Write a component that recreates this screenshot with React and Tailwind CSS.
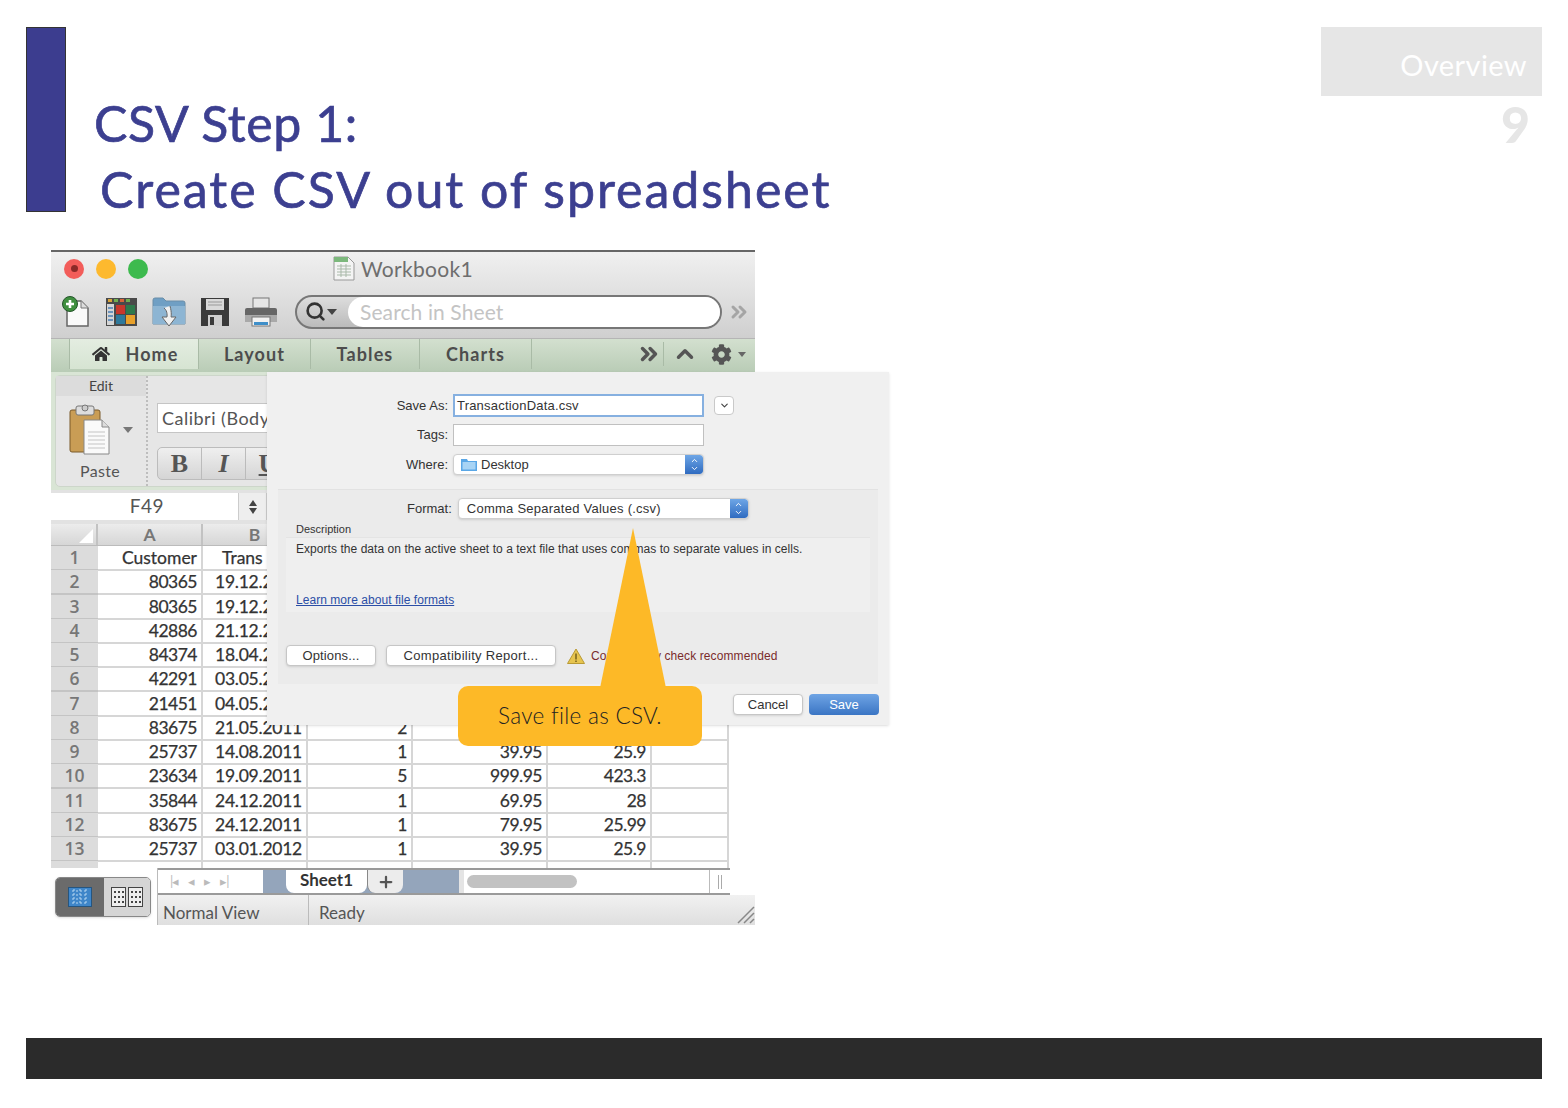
import React from 'react';
import { ChevronUp, ChevronDown, ChevronsRight, Search, Plus } from 'lucide-react';
import { FaHome, FaCog } from 'react-icons/fa';

const COLS = 'grid grid-cols-[47px_105px_105px_105px_135px_104px_77px]';

const ROWS = [
  ['Customer', 'Trans', '', '', '', ''],
  ['80365', '19.12.2010', '', '', '', ''],
  ['80365', '19.12.2010', '', '', '', ''],
  ['42886', '21.12.2010', '', '', '', ''],
  ['84374', '18.04.2011', '', '', '', ''],
  ['42291', '03.05.2011', '', '', '', ''],
  ['21451', '04.05.2011', '', '', '', ''],
  ['83675', '21.05.2011', '2', '', '', ''],
  ['25737', '14.08.2011', '1', '39.95', '25.9', ''],
  ['23634', '19.09.2011', '5', '999.95', '423.3', ''],
  ['35844', '24.12.2011', '1', '69.95', '28', ''],
  ['83675', '24.12.2011', '1', '79.95', '25.99', ''],
  ['25737', '03.01.2012', '1', '39.95', '25.9', ''],
];

/* toolbar icons */
const NewIcon = () => (
  <svg width="30" height="34" viewBox="0 0 30 34">
    <path d="M6 6h14l7 7v18H6z" fill="#fafafa" stroke="#666" strokeWidth="1.5" />
    <path d="M20 6v7h7" fill="#ddd" stroke="#777" />
    <circle cx="9" cy="9" r="7.5" fill="#3f8f3f" stroke="#24552a" />
    <path d="M9 5v8M5 9h8" stroke="#fff" strokeWidth="2.6" />
  </svg>
);

const GalleryIcon = () => (
  <svg width="33" height="30" viewBox="0 0 33 30">
    <rect x="1" y="1" width="31" height="28" fill="#4a4a4a" />
    <rect x="3" y="2" width="4" height="3" fill="#d8a33a" />
    <rect x="9" y="2" width="4" height="3" fill="#6fae4f" />
    <rect x="15" y="2" width="4" height="3" fill="#d8633a" />
    <rect x="21" y="2" width="4" height="3" fill="#6fae4f" />
    <rect x="2" y="7" width="7" height="21" fill="#d5d5d5" />
    <path d="M3 11h5M3 15h5M3 19h5M3 23h5" stroke="#4a7fb5" strokeWidth="1.6" />
    <rect x="11" y="8" width="9" height="9" fill="#c9372c" />
    <rect x="21" y="8" width="9" height="9" fill="#2f7a4c" />
    <rect x="11" y="18" width="9" height="9" fill="#2f7a9c" />
    <rect x="21" y="18" width="9" height="9" fill="#e8a12b" />
  </svg>
);

const OpenIcon = () => (
  <svg width="34" height="32" viewBox="0 0 34 32">
    <path d="M1 4q0-2 2-2h8l3 3h17q2 0 2 2v21H1z" fill="#6f9fc4" stroke="#6a8ea8" />
    <path d="M1 10h32v18H1z" fill="#8db5d3" />
    <path d="M18 10c2 7 1 11 1 11h5l-7 9-7-9h5s1-6-3-9" fill="#f0f0f0" stroke="#666" />
  </svg>
);

const SaveIcon = () => (
  <svg width="30" height="30" viewBox="0 0 30 30">
    <path d="M1 1h28v28H1z" fill="#3a3a3a" />
    <rect x="6" y="2" width="18" height="11" fill="#d9d9d9" />
    <path d="M8 5h14M8 8h14" stroke="#999" />
    <rect x="8" y="18" width="14" height="11" fill="#cfcfcf" />
    <rect x="10" y="20" width="4" height="8" fill="#3a3a3a" />
  </svg>
);

const PrintIcon = () => (
  <svg width="34" height="30" viewBox="0 0 34 30">
    <rect x="9" y="1" width="16" height="10" fill="#e6e6e6" stroke="#777" />
    <path d="M3 11h28q2 0 2 2v11H1V13q0-2 2-2z" fill="#666" />
    <rect x="1" y="18" width="32" height="7" fill="#a9a9a9" />
    <rect x="8" y="20" width="18" height="9" fill="#f2f2f2" stroke="#777" />
    <rect x="10" y="25" width="14" height="3" fill="#3f8fc9" />
  </svg>
);

const PasteIcon = () => (
  <svg width="42" height="52" viewBox="0 0 42 52">
    <rect x="1" y="6" width="30" height="42" rx="2" fill="#c99d55" stroke="#7a5a2a" />
    <rect x="7" y="2" width="18" height="9" rx="2" fill="#ddd" stroke="#777" />
    <circle cx="16" cy="4" r="3" fill="#ccc" stroke="#777" />
    <path d="M15 16h18l7 7v27H15z" fill="#fafafa" stroke="#888" />
    <path d="M33 16v7h7" fill="#ddd" stroke="#888" />
    <path d="M19 28h17M19 32h17M19 36h17M19 40h17M19 44h17" stroke="#c4c4c4" />
  </svg>
);

const Stepper = () => (
  <span className="w-[18px] h-full flex flex-col items-center justify-center rounded-r-[3px] bg-gradient-to-b from-[#6ea6e6] to-[#2f6bc0]">
    <ChevronUp size={9} strokeWidth={2.5} className="text-white -mb-[1px]" />
    <ChevronDown size={9} strokeWidth={2.5} className="text-white" />
  </span>
);

const Select = ({ width, children }) => (
  <div className={`${width} h-[21px] flex items-center bg-white rounded-[4px] border border-[#cfcfcf] shadow-sm overflow-hidden`}>
    <span className="flex-1 flex items-center">{children}</span>
    <Stepper />
  </div>
);

const Btn = ({ width, tracking = '', children }) => (
  <button className={`${width} ${tracking} h-[21px] bg-white rounded-[4px] border border-[#c6c6c6] shadow-sm text-[13px] text-[#333] flex items-center justify-center`}>
    {children}
  </button>
);

const TitleBar = () => (
  <div className="h-[40px] flex items-center pb-[5px] border-t-2 border-[#666] bg-gradient-to-b from-[#f0f0f0] to-[#e2e2e2] pl-[13px]">
    <div className="flex gap-[12px]">
      <span className="w-[20px] h-[20px] rounded-full bg-[#f25d5a] flex items-center justify-center">
        <span className="w-[7px] h-[7px] rounded-full bg-[#8a2a28]" />
      </span>
      <span className="w-[20px] h-[20px] rounded-full bg-[#fdb92e]" />
      <span className="w-[20px] h-[20px] rounded-full bg-[#3dba4e]" />
    </div>
    <svg width="22" height="25" viewBox="0 0 22 25" className="ml-[185px]">
      <path d="M1 1h14l6 6v17H1z" fill="#f4f4f4" stroke="#999" />
      <path d="M1 1h14v5H1z" fill="#7cb87c" />
      <path d="M4 10h14M4 13h14M4 16h14M4 19h14M8 8v13M13 8v13" stroke="#a9b9a9" />
    </svg>
    <span className="ml-[6px] text-[21px] text-[#6e6e6e] font-['Lato',sans-serif] tracking-[0.3px]">Workbook1</span>
  </div>
);

const Toolbar = () => (
  <div className="h-[48px] flex items-center pb-[5px] pl-[10px] bg-gradient-to-b from-[#e2e2e2] to-[#cfcfcf]">
    <div className="flex items-center w-[234px] gap-[14px]">
      <NewIcon />
      <GalleryIcon />
      <OpenIcon />
      <SaveIcon />
      <PrintIcon />
    </div>
    <div className="w-[427px] h-[34px] flex items-center rounded-full border-2 border-[#777] bg-gradient-to-b from-[#ddd] to-[#bbb] pl-[8px]">
      <Search size={21} strokeWidth={3} className="text-[#333]" />
      <span className="w-0 h-0 ml-[1px] border-x-[5px] border-t-[6px] border-x-transparent border-t-[#444]" />
      <span className="flex-1 h-full ml-[11px] rounded-full bg-white pl-[12px] text-[21px] leading-[30px] tracking-[0.1px] text-[#c4c4c4] font-['Lato',sans-serif]">
        Search in Sheet
      </span>
    </div>
    <ChevronsRight size={24} strokeWidth={3} className="ml-[5px] text-[#a5a5a5]" />
  </div>
);

const Tabs = () => (
  <div className="h-[34px] flex items-stretch pb-[3px] border-t border-[#b5b5b5] bg-gradient-to-b from-[#d3e0cf] to-[#b9ccb6] font-['Lato',sans-serif] font-bold text-[18px] text-[#4d4d4d] tracking-[1.1px] pl-[18px]">
    <div className="w-[130px] flex items-center justify-center gap-[15px] pl-[3px] bg-gradient-to-b from-[#e4ede1] to-[#d6e4d2] border-x border-[#a9bba6]">
      <FaHome size={18} className="text-[#333]" />
      Home
    </div>
    <div className="w-[112px] flex items-center justify-center border-r border-[#a9bba6]">Layout</div>
    <div className="w-[109px] flex items-center justify-center border-r border-[#a9bba6]">Tables</div>
    <div className="w-[112px] flex items-center justify-center border-r border-[#a9bba6]">Charts</div>
    <div className="flex-1 flex items-center justify-end pr-[9px] text-[#555]">
      <ChevronsRight size={26} strokeWidth={3.2} />
      <span className="w-px h-[24px] bg-[#a9bba6] mr-[8px] ml-[1px]" />
      <ChevronUp size={26} strokeWidth={3.2} className="mr-[13px]" />
      <FaCog size={21} className="text-[#555]" />
      <span className="ml-[6px] w-0 h-0 border-x-[4px] border-t-[5px] border-x-transparent border-t-[#666]" />
    </div>
  </div>
);

const Ribbon = () => (
  <div className="h-[118px] bg-[#d9e5d5] px-[4px] pt-[3px] pb-[3px] overflow-hidden">
    <div className="h-full rounded-[5px] bg-[#e6e6e6] border border-[#cdd6ca] flex font-['Lato',sans-serif]">
      <div className="w-[92px] flex flex-col border-r-2 border-dotted border-[#bdbdbd]">
        <div className="h-[20px] bg-[#dcdcdc] text-center text-[14px] leading-[20px] text-[#444]">Edit</div>
        <div className="flex items-center pl-[13px] mt-[8px]">
          <PasteIcon />
          <span className="ml-[12px] w-0 h-0 border-x-[5px] border-t-[6px] border-x-transparent border-t-[#777]" />
        </div>
        <div className="text-center text-[16px] text-[#555] tracking-[0.3px] mt-[3px] pr-[2px]">Paste</div>
      </div>
      <div className="pl-[9px] pt-[27px] flex flex-col gap-[14px]">
        <div className="w-[200px] h-[30px] bg-white border border-[#c5c5c5] pl-[4px] text-[18px] leading-[28px] tracking-[0.5px] text-[#555]">Calibri (Body)</div>
        <div className="w-[200px] h-[33px] flex rounded-[5px] border border-[#bcbcbc] bg-gradient-to-b from-[#efefef] to-[#d5d5d5] font-['Liberation_Serif',serif] text-[26px] leading-[31px] text-[#555] text-center">
          <span className="w-[44px] font-bold border-r border-[#bbb]">B</span>
          <span className="w-[44px] italic font-bold border-r border-[#bbb]">I</span>
          <span className="w-[44px] font-bold underline">U</span>
        </div>
      </div>
    </div>
  </div>
);

const NameBox = () => (
  <div className="h-[34px] pt-[3px] pb-[4px] bg-[#e2e2e2] flex">
    <div className="w-[187px] bg-white text-center pl-[5px] text-[19px] leading-[26px] tracking-[0.5px] text-[#555] font-['Lato',sans-serif]">F49</div>
    <div className="w-[29px] bg-[#eee] border-x border-[#ccc] flex flex-col items-center justify-center gap-[2px]">
      <span className="w-0 h-0 border-x-[4px] border-b-[6px] border-x-transparent border-b-[#444]" />
      <span className="w-0 h-0 border-x-[4px] border-t-[6px] border-x-transparent border-t-[#444]" />
    </div>
  </div>
);

const Sheet = () => (
  <div className="font-['Lato',sans-serif] text-[17.5px] text-[#333] bg-white [-webkit-text-stroke:0.25px_#333]">
    <div className={`${COLS} h-[22px] bg-gradient-to-b from-[#ececec] to-[#d6d6d6] border-b border-[#bbb] w-[678px] text-[#777] font-bold text-center leading-[21px] [-webkit-text-stroke:0]`}>
      <div className="border-r-2 border-[#c2c2c2] relative">
        <span className="absolute right-[3px] bottom-[2px] w-0 h-0 border-l-[14px] border-b-[14px] border-l-transparent border-b-white" />
      </div>
      {['A', 'B', '', '', '', ''].map((c, k) => (
        <div key={k} className="border-r-2 border-[#c2c2c2]">{c}</div>
      ))}
    </div>
    {ROWS.map((row, i) => (
      <div key={i} className={`${COLS} h-[24.25px] w-[678px] leading-[23px]`}>
        <div className="bg-[#dcdcdc] border-b-2 border-[#c4c4c4] text-center font-['Open_Sans',sans-serif] font-semibold text-[#777] [-webkit-text-stroke:0]">{i + 1}</div>
        {row.map((v, j) => (
          <div
            key={j}
            className={`border-b-2 border-r-2 border-[#d6d6d6] pr-[4px] whitespace-nowrap overflow-hidden ${j === 1 && i === 0 ? 'text-left pl-[19px]' : 'text-right'} ${i === 0 ? '' : j === 1 ? 'tracking-[-0.25px]' : 'tracking-[-0.5px]'}`}
          >
            {v}
          </div>
        ))}
      </div>
    ))}
    <div className={`${COLS} h-[7px] w-[678px]`}>
      <div className="bg-[#dcdcdc]" />
      {[0, 1, 2, 3, 4, 5].map((k) => <div key={k} className="border-r-2 border-[#d6d6d6]" />)}
    </div>
  </div>
);

const BottomBar = () => (
  <div className="h-[57px] flex font-['Lato',sans-serif]">
    <div className="w-[106px] pl-[4px] pt-[9px]">
      <div className="w-[96px] h-[40px] rounded-[5px] flex overflow-hidden border border-[#888] shadow">
        <div className="w-[48px] bg-[#6b6b6b] flex items-center justify-center">
          <svg width="24" height="20" viewBox="0 0 24 20">
            <rect x="0.5" y="0.5" width="23" height="19" fill="#3f86c9" stroke="#26557f" />
            <path d="M4 4h16M4 8h16M4 12h16M4 16h16M6 2v16M12 2v16M18 2v16" stroke="#b9d8f1" strokeDasharray="2 2" />
          </svg>
        </div>
        <div className="flex-1 bg-[#d5d5d5] flex items-center justify-center gap-[2px]">
          <svg width="32" height="20" viewBox="0 0 32 20">
            <rect x="0.5" y="0.5" width="14" height="19" fill="#eee" stroke="#444" />
            <rect x="17.5" y="0.5" width="14" height="19" fill="#eee" stroke="#444" />
            <path d="M3 4h2v2H3zM7 4h2v2H7zM11 4h2v2h-2zM3 9h2v2H3zM7 9h2v2H7zM11 9h2v2h-2zM3 14h2v2H3zM7 14h2v2H7zM11 14h2v2h-2zM20 4h2v2h-2zM24 4h2v2h-2zM28 4h2v2h-2zM20 9h2v2h-2zM24 9h2v2h-2zM28 9h2v2h-2zM20 14h2v2h-2zM24 14h2v2h-2zM28 14h2v2h-2z" fill="#444" />
          </svg>
        </div>
      </div>
    </div>
    <div className="flex-1 flex flex-col border-l border-[#bbb]">
      <div className="h-[27px] w-[572px] flex border-t-2 border-b-2 border-[#9a9a9a]">
        <div className="w-[105px] bg-white flex items-center gap-[10px] pl-[12px] text-[#bbb] text-[13px] tracking-[-1px]">
          <span>|◂</span><span>◂</span><span>▸</span><span>▸|</span>
        </div>
        <div className="w-[196px] bg-[#94a5bb] flex pl-[23px]">
          <div className="w-[81px] bg-white rounded-b-[8px] text-center font-bold text-[17px] leading-[20px] text-[#333]">Sheet1</div>
          <div className="w-[36px] bg-[#ececec] rounded-b-[8px] border-l border-[#888] flex items-center justify-center">
            <Plus size={18} strokeWidth={3} className="text-[#555]" />
          </div>
        </div>
        <div className="w-[5px] bg-[#e4e4e4]" />
        <div className="flex-1 bg-white flex items-center pl-[3px] border-r border-[#bbb]">
          <span className="w-[110px] h-[13px] rounded-full bg-[#c2c2c2]" />
        </div>
        <div className="w-[20px] bg-white flex items-center justify-center gap-[2px]">
          <span className="w-px h-[14px] bg-[#aaa]" />
          <span className="w-px h-[14px] bg-[#aaa]" />
        </div>
      </div>
      <div className="h-[30px] flex items-center bg-gradient-to-b from-[#f1f1f1] to-[#dfdfdf] text-[17px] text-[#555]">
        <div className="w-[151px] h-full flex items-center pl-[5px] pt-[4px] border-r border-[#bbb]">Normal View</div>
        <div className="flex-1 pl-[10px] pt-[4px]">Ready</div>
        <svg width="20" height="20" viewBox="0 0 20 20" className="self-end mb-[1px]">
          <path d="M3 19 19 3M9 19 19 9M15 19l4-4" stroke="#888" strokeWidth="1.5" />
        </svg>
      </div>
    </div>
  </div>
);

const SaveDialog = () => (
  <div className="absolute left-[216px] top-[122px] w-[622px] h-[353px] bg-[#f0f0f0] shadow-sm font-['Liberation_Sans',sans-serif] text-[13px] text-[#333] flex flex-col">
    {/* name, tags and location */}
    <div className="h-[117px] grid grid-cols-[181px_auto_1fr] items-center content-start gap-x-[5px] pt-[22px] gap-y-[7px]">
      <span className="text-right">Save As:</span>
      <div className="w-[251px] h-[23px] bg-white border-2 border-[#86b0e0] leading-[19px] pl-[2px] tracking-[0.2px]">TransactionData.csv</div>
      <span className="ml-[5px] w-[20px] h-[19px] bg-white border border-[#c9c9c9] rounded-[4px] flex items-center justify-center">
        <ChevronDown size={11} strokeWidth={2.5} className="text-[#444]" />
      </span>
      <span className="text-right">Tags:</span>
      <div className="w-[251px] h-[22px] bg-white border border-[#c0c0c0]" />
      <span />
      <span className="text-right mt-[1px]">Where:</span>
      <Select width="w-[251px] mt-[1px]">
        <svg width="16" height="13" viewBox="0 0 16 13" className="ml-[7px] mr-[4px]">
          <path d="M0 1h6l1 2h9v10H0z" fill="#5aa7e6" />
          <rect x="1.5" y="4" width="13" height="7.5" fill="#a8d4f5" />
        </svg>
        Desktop
      </Select>
      <span />
    </div>

    {/* format panel */}
    <div className="mx-[11px] w-[600px] h-[195px] bg-[#ebebeb] border-t border-[#e2e2e2] flex flex-col">
      <div className="flex items-center justify-start pl-[129px] pt-[8px] gap-[6px]">
        <span>Format:</span>
        <Select width="w-[291px]">
          <span className="pl-[8px] tracking-[0.25px]">Comma Separated Values (.csv)</span>
        </Select>
      </div>
      <div className="pl-[18px] pt-[3px] text-[11px] leading-[15px] h-[18px]">Description</div>
      <div className="ml-[8px] w-[584px] h-[75px] bg-[#efefef] border-t border-[#e4e4e4] pl-[10px] pt-[4px] flex flex-col justify-between pb-[4px] text-[12px] leading-[15px] tracking-[0.05px]">
        <span>Exports the data on the active sheet to a text file that uses commas to separate values in cells.</span>
        <span className="text-[#2b4ea6] underline text-[12px] tracking-[0.05px]">Learn more about file formats</span>
      </div>
      <div className="flex items-center pl-[8px] mt-[33px] h-[21px]">
        <Btn width="w-[90px]" tracking="tracking-[0.15px]">Options...</Btn>
        <Btn width="w-[170px] ml-[10px]" tracking="tracking-[0.3px]">Compatibility Report...</Btn>
        <svg width="18" height="16" viewBox="0 0 18 16" className="ml-[11px]">
          <path d="M9 1 17.5 15.5H.5z" fill="#e6c44f" stroke="#b99a35" />
          <path d="M9 5.5v6M9 12.5v1.5" stroke="#6e5a18" strokeWidth="1.4" />
        </svg>
        <span className="ml-[6px] text-[#7a2b2b] text-[12px] tracking-[0.1px]">Compatibility check recommended</span>
      </div>
    </div>

    {/* actions */}
    <div className="flex justify-end pr-[10px] gap-[6px] mt-[10px]">
      <Btn width="w-[70px]">Cancel</Btn>
      <button className="w-[70px] h-[21px] rounded-[4px] bg-gradient-to-b from-[#6fa4e4] to-[#3a75c4] text-white text-[13px]">Save</button>
    </div>
  </div>
);

const Callout = () => (
  <>
    <svg width="70" height="162" viewBox="0 0 70 162" className="absolute left-[547px] top-[277px]">
      <path d="M2 161 35 1 68 161z" fill="#fdb927" />
    </svg>
    <div className="absolute left-[407px] top-[436px] w-[244px] h-[60px] rounded-[10px] bg-[#fdb927] flex items-center justify-center text-[22.5px] text-[#222] font-['Lato',sans-serif] font-light tracking-[0.3px]">
      Save file as CSV.
    </div>
  </>
);

export default function App() {
  return (
    <div className="w-[1568px] h-[1108px] bg-white flex flex-col px-[26px] pt-[27px] pb-[29px] overflow-hidden">
      {/* slide header */}
      <div className="flex justify-between h-[185px]">
        <div className="flex gap-[28px]">
          <div className="w-[40px] h-[185px] bg-[#3c3d8f] border border-[#333]" />
          <h1 className="pt-[63px] text-[50px] leading-[66px] text-[#3c3f90] font-['Lato',sans-serif] font-normal whitespace-nowrap [-webkit-text-stroke:0.7px_#3c3f90]">
            <div className="tracking-[0.6px]">CSV Step 1:</div>
            <div className="pl-[6px] tracking-[2px]">Create CSV out of spreadsheet</div>
          </h1>
        </div>
        <div className="w-[221px] flex flex-col items-end">
          <div className="w-full h-[69px] bg-[#e6e6e6] text-right pr-[15px] text-[29px] leading-[76px] tracking-[0.4px] text-white font-['Lato',sans-serif]">Overview</div>
          <div className="pr-[12px] text-[50px] leading-[56px] font-black text-[#e6e6e6] font-['Lato',sans-serif]">9</div>
        </div>
      </div>

      {/* excel window */}
      <div className="relative ml-[25px] mt-[38px] w-[704px] h-[675px]">
        <TitleBar />
        <Toolbar />
        <Tabs />
        <Ribbon />
        <NameBox />
        <Sheet />
        <BottomBar />
        <SaveDialog />
        <Callout />
      </div>

      <div className="mt-auto h-[41px] bg-[#2b2b2b]" />
    </div>
  );
}
